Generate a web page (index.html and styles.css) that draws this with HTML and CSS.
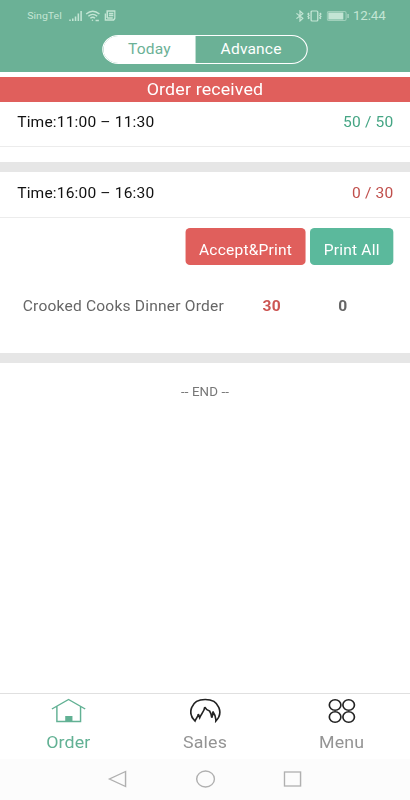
FILE: index.html
```html
<!DOCTYPE html>
<html lang="en">

<head>
    <meta charset="UTF-8">
    <meta name="viewport" content="width=device-width, initial-scale=1.0">
    <title>Orders</title>
    <link rel="stylesheet" href="styles.css">
</head>

<body>
<div class="screen">
    <!-- Header -->
    <header class="header">
        <div class="status-bar">
            <div class="status-left">
                <span class="carrier">SingTel</span>
                <svg class="signal" width="12" height="12" viewBox="0 0 12 12" stroke="currentColor" stroke-width="1.4">
                    <path d="M1 11v-1.5M3.5 11V8.5M6 11V6.5M8.5 11V3.5M11 11V1"/>
                </svg>
                <svg class="wifi" width="13" height="12" viewBox="0 0 13 12" fill="none" stroke="currentColor" stroke-width="1.3">
                    <path d="M.5 4Q6.500-1.500 12.500 4M2.500 6.200Q6.500 2.500 10.500 6.200M4.300 8.300Q6.500 6.300 8.500 8.300"/>
                    <circle cx="6.200" cy="10.300" r=".7" fill="currentColor" stroke="none"/>
                    <path d="M9 10.500h3"/>
                </svg>
                <svg class="news" width="10" height="11" viewBox="0 0 10 11" fill="none" stroke="currentColor" stroke-width="1.400">
                    <path d="M2.500 8V1h7v7.300L8.200 10H.7V3.500M4 3.500h4M4 5.500h4M2.500 8h5"/>
                </svg>
            </div>
            <div class="status-right">
                <svg width="8" height="12" viewBox="0 0 8 12" fill="none" stroke="currentColor" stroke-width="1.100">
                    <path d="M.8 3.300l5.800 5L4 11V1l2.600 2.700-5.800 5"/>
                </svg>
                <svg class="vibrate" width="14" height="12" viewBox="0 0 14 12" fill="none" stroke="currentColor" stroke-width="1.200">
                    <rect x="4" y="1" width="6" height="10" rx="1"/>
                    <path d="M2.200 3l-1 1 1 1.300-1 1.300 1 1.300-1 1M11.800 3l1 1-1 1.300 1 1.300-1 1.300 1 1"/>
                </svg>
                <svg class="battery" width="20" height="10" viewBox="0 0 20 10" fill="none" stroke="currentColor">
                    <rect x=".5" y=".5" width="17" height="9" rx="1.500" opacity=".6"/>
                    <rect x="1.500" y="1.500" width="13.500" height="7" fill="currentColor" stroke="none"/>
                    <path d="M19.300 3v4"/>
                </svg>
                <span class="clock">12:44</span>
            </div>
        </div>
        <div class="switch">
            <a class="switch-item active" href="#">Today</a>
            <a class="switch-item" href="#">Advance</a>
        </div>
    </header>

    <!-- Orders -->
    <main class="orders">
        <div class="notice">Order received</div>

        <section class="slot">
            <div class="slot-head">
                <span>Time:11:00 – 11:30</span>
                <span class="count done">50 / 50</span>
            </div>
        </section>

        <section class="slot slot-open">
            <div class="slot-head">
                <span>Time:16:00 – 16:30</span>
                <span class="count pending">0 / 30</span>
            </div>
            <div class="actions">
                <button class="btn btn-accept">Accept&amp;Print</button>
                <button class="btn btn-print">Print All</button>
            </div>
            <div class="item">
                <span class="item-name">Crooked Cooks Dinner Order</span>
                <span class="item-left">30</span>
                <span class="item-done">0</span>
            </div>
        </section>

        <p class="end">-- END --</p>
    </main>

    <!-- Tabs -->
    <nav class="tabs">
        <a class="tab active" href="#">
            <svg width="32" height="26" viewBox="0 0 32 26" fill="none" stroke="currentColor" stroke-width="1.300">
                <path d="M.7 11L15.700 1.500l15 9.500M5.200 8.500v15h21.300v-15"/>
                <rect x="12.700" y="18" width="6.500" height="5.500" fill="currentColor" stroke="none"/>
            </svg>
            <span>Order</span>
        </a>
        <a class="tab" href="#">
            <svg class="dark" width="28" height="26" viewBox="0 0 28 26" fill="none" stroke="currentColor" stroke-width="1.500">
                <path d="M4.500 23C-2.500 15.500.5 1.500 13.700 1.500S30 15.500 23.300 23C23.500 20 22.500 16.500 20.500 13.500c.4 2 0 4-.9 6.200-.1-2.700-.7-4.700-2-6.700C16 12.500 14.300 11.500 13.300 9c-.2 4-3.300 7-4.600 10.700L7.500 16C7.500 18.500 5.500 20 4.500 23z"/>
            </svg>
            <span>Sales</span>
        </a>
        <a class="tab" href="#">
            <svg class="dark" width="26" height="26" viewBox="0 0 26 26" fill="none" stroke="currentColor" stroke-width="1.500">
                <circle cx="6.600" cy="7" r="5.200"/>
                <circle cx="18.800" cy="7" r="5.200"/>
                <circle cx="6.600" cy="19" r="5.200"/>
                <circle cx="18.800" cy="19" r="5.200"/>
            </svg>
            <span>Menu</span>
        </a>
    </nav>

    <!-- System buttons -->
    <div class="system-bar">
        <svg width="18" height="18" viewBox="0 0 18 18"><path d="M16 1.500v15L1.500 9z"/></svg>
        <svg width="18" height="18" viewBox="0 0 18 18"><circle cx="9" cy="9" r="8"/></svg>
        <svg width="18" height="18" viewBox="0 0 18 18"><rect x="1" y="2" width="14.500" height="14"/></svg>
    </div>
</div>
</body>

</html>
```
FILE: styles.css
```css
body {
    font-family: Roboto, sans-serif;
    margin: 0;
    background-color: #fff;
    overflow: hidden;
}

.screen {
    display: flex;
    flex-direction: column;
    width: 369px;
    height: 800px;
    transform: scaleX(1.1111);
    transform-origin: 0 0;
    letter-spacing: 0.15px;
}

a {
    text-decoration: none;
}

svg {
    display: block;
}

.header {
    height: 72px;
    background-color: #6bb196;
}

.status-bar {
    display: flex;
    justify-content: space-between;
    align-items: center;
    height: 31px;
    padding: 0 22px 0 24.5px;
    box-sizing: border-box;
    color: #c3e5d4;
}

.status-left,
.status-right {
    display: flex;
    align-items: center;
}

.carrier {
    font-size: 9.5px;
    width: 37.5px;
    letter-spacing: 0;
}

.wifi {
    margin-left: 3px;
}

.news {
    margin-left: 3.5px;
}

.vibrate {
    margin-left: 2px;
}

.battery {
    margin: 0 4px;
}

.clock {
    font-size: 12px;
    letter-spacing: -0.1px;
}

.switch {
    display: flex;
    width: 185px;
    height: 29px;
    margin: 4px auto 0;
    box-sizing: border-box;
    border: 1px solid #fff;
    border-radius: 15px;
    overflow: hidden;
}

.switch-item {
    flex: 1;
    font-size: 14px;
    line-height: 26px;
    text-align: center;
    color: #fff;
}

.switch-item.active {
    flex: 0 0 83px;
    background-color: #fff;
    color: #6bb196;
}

.orders {
    flex: 1;
    padding-top: 5px;
}

.notice {
    height: 25px;
    line-height: 25px;
    font-size: 16px;
    text-align: center;
    background-color: #e05f5c;
    color: #fff;
}

.slot {
    height: 60px;
    border-bottom: 10px solid #e6e6e6;
}

.slot-open {
    height: 181px;
}

.slot-head {
    display: flex;
    justify-content: space-between;
    height: 44px;
    line-height: 41px;
    padding: 0 15px 0 15.5px;
    border-bottom: 1px solid #ececec;
    font-size: 14px;
    color: #111;
}

.slot-open .slot-head {
    height: 45px;
    line-height: 43px;
}

.done {
    color: #45a584;
}

.pending {
    color: #c04f4c;
}

.actions {
    display: flex;
    justify-content: flex-end;
    gap: 4px;
    padding: 10px 15px 0 0;
}

.btn {
    height: 37px;
    padding: 6px 0 0;
    border: none;
    border-radius: 4px;
    font-family: inherit;
    font-size: 14px;
    letter-spacing: 0.18px;
    color: #fff;
}

.btn-accept {
    width: 108px;
    background-color: #e05f5c;
}

.btn-print {
    width: 75px;
    background-color: #5bb99c;
}

.item {
    display: grid;
    grid-template-columns: 192px 64px 64px;
    margin: 31px 0 0 20.5px;
    font-size: 14px;
    line-height: 20px;
    letter-spacing: 0.18px;
    color: #666;
}

.item-left,
.item-done {
    font-weight: bold;
    text-align: center;
}

.item-left {
    color: #cc5552;
}

.end {
    margin: 21px 0 0;
    font-size: 12px;
    line-height: 16px;
    text-align: center;
    letter-spacing: 0.1px;
    color: #777;
}

.tabs {
    display: flex;
    height: 65px;
    border-top: 1px solid #e0e0e0;
}

.tab {
    flex: 1;
    display: flex;
    flex-direction: column;
    align-items: center;
    padding-top: 4px;
    font-size: 16px;
    line-height: 20px;
    color: #949494;
}

.tab span {
    margin-top: 9px;
}

.tab.active {
    color: #62b194;
}

.tab .dark {
    color: #222;
}

.system-bar {
    display: flex;
    justify-content: center;
    align-items: center;
    gap: 61px;
    height: 41px;
    padding-bottom: 2px;
    box-sizing: border-box;
    background-color: #fcfcfc;
    fill: none;
    stroke: #b0b0b0;
    stroke-width: 1.300;
}
```
